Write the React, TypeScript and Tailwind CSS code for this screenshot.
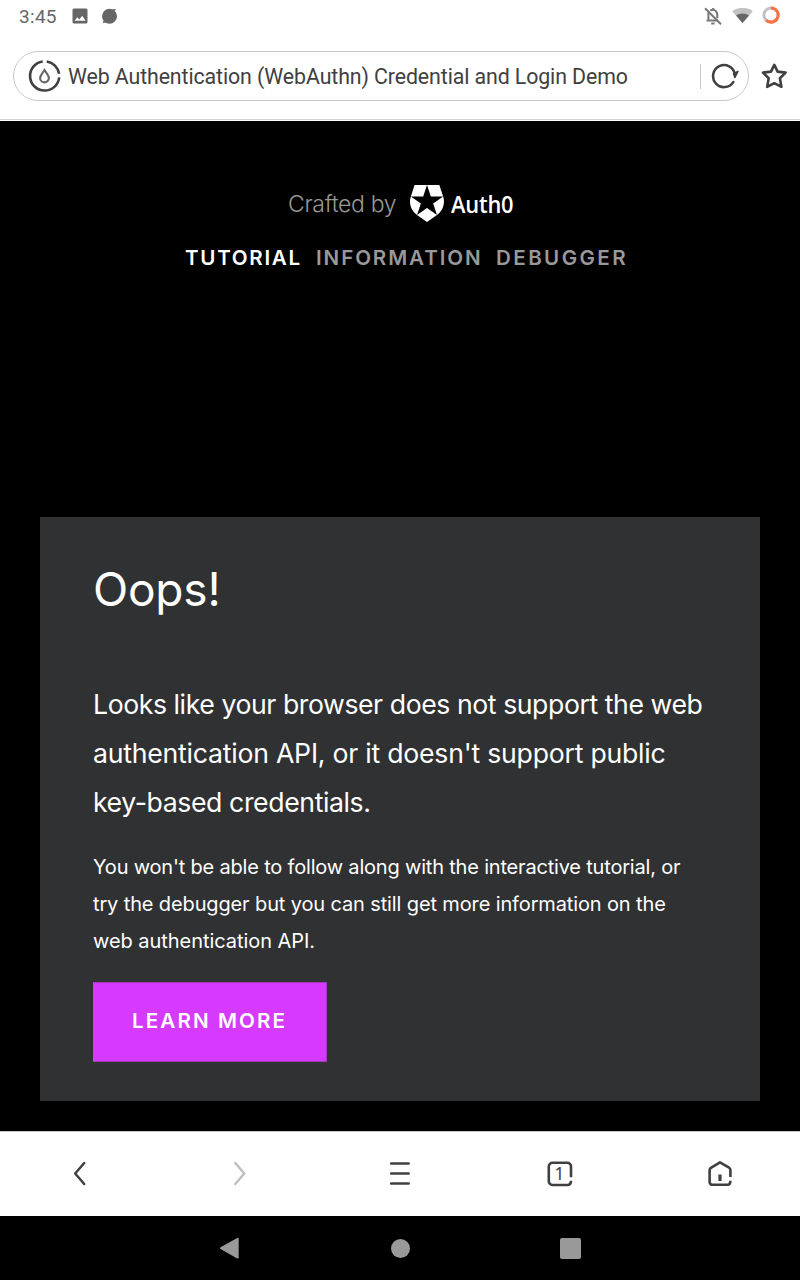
import React from "react";

const ink = "#404042";

function StatusBar() {
  return (
    <div className="flex h-8 items-center pl-[19px] pr-5">
      <span className="w-[53px] whitespace-nowrap pt-px font-['Roboto',sans-serif] text-[19px] leading-8 tracking-[0.3px] text-[#666]">3:45</span>
      <svg className="h-4 w-4" viewBox="0 0 16 16">
        <rect x=".5" y=".5" width="15" height="15" rx="1.6" fill="#666" />
        <path d="M2.6 12.7 5.3 9.2l2 2.3 2.9-3.8 3.4 5z" fill="#fff" />
      </svg>
      <svg className="ml-[13px] h-4 w-[17px]" viewBox="0 0 17 16">
        <circle cx="8.5" cy="8.2" r="7.5" fill="#666" />
        <path d="M11 1.2 14.8.9 14 3M2 12.5 2.2 15.3 5 14.6" fill="#666" />
      </svg>
      <svg className="ml-auto h-[18px] w-[18px]" viewBox="0 0 18 18" fill="none" stroke="#777" strokeWidth="2">
        <path d="M1 1.2 17 17.2" />
        <path d="M4.4 5.2V13M2.6 13.6h11.2M6.3 3.6C8 2.5 10.3 2.8 11.8 4.1c1.1 1 1.5 2.2 1.5 3.7v3.4" />
        <path d="M9.2 1v2M7.2 16.4h3.4" />
      </svg>
      <svg className="ml-[10px] h-4 w-[21px]" viewBox="0 0 21 16">
        <path d="M.2 3.2C6-1.3 15-1.3 20.8 3.2L10.5 15z" fill="#c1c1c1" />
        <path d="M4 7.6C8 4.7 13 4.7 17 7.6L10.5 15z" fill="#666" />
      </svg>
      <svg className="-mt-[2px] ml-[9px] h-[18px] w-[18px]" viewBox="0 0 18 18" fill="none" strokeWidth="3">
        <circle cx="9" cy="9" r="7.1" stroke="#c1c1c1" />
        <path d="M9 1.9a7.1 7.1 0 1 1-4.8 12.3" stroke="#ff7043" />
      </svg>
    </div>
  );
}

function AddressBar() {
  return (
    <div className="flex h-[88px] items-center pl-[13px]">
      <div className="flex h-[50px] w-[736px] items-center rounded-full border border-[#c8c8c8] pl-[14px]">
        <svg className="h-[34px] w-[34px] shrink-0" viewBox="0 0 34 34" fill="none" stroke={ink} strokeWidth="2.6">
          <path d="M14.7 2.5A14.6 14.6 0 1 0 31.2 18.4M18.7 2.5A14.6 14.6 0 0 1 31.1 14.8" />
          <path d="M16.5 11c-2.3 3.6-4.4 5.4-4.4 8a4.4 4.4 0 0 0 8.8 0c0-2.6-2.1-4.4-4.4-8z" stroke="#666" strokeWidth="2.1" />
        </svg>
        <span className="ml-[6px] whitespace-nowrap pt-[2px] font-['Roboto',sans-serif] text-[21.33px] tracking-[-0.1px] text-[#404042]">
          Web Authentication (WebAuthn) Credential and Login Demo
        </span>
        <span className="ml-auto h-[25px] w-px bg-[#c8c8c8]" />
        <svg className="ml-[10px] mr-[9px] h-7 w-7 shrink-0" viewBox="0 0 28 28" fill="none" stroke={ink} strokeWidth="2.5">
          <path d="M22.3 20.1A11 11 0 1 1 23.9 12.3" strokeLinecap="round" />
          <path d="M22.6 11.8 23.9 15.4l3-6z" fill={ink} strokeWidth="1.6" strokeLinejoin="round" />
        </svg>
      </div>
      <svg className="ml-3 h-7 w-7" viewBox="0 0 28 28" fill="none" stroke={ink} strokeWidth="2.6" strokeLinejoin="round">
        <path d="M13.3 2.8 16.6 9.6 24.6 10.6 18.9 16.2 20.4 24.8 13.3 21.2 6.2 24.8 7.7 16.2 2 10.6 10 9.6z" />
      </svg>
    </div>
  );
}

function Content() {
  return (
    <main className="h-[1010px] bg-black px-10 pt-[60px] font-['Inter',sans-serif] text-white">
      <div className="flex h-11 items-center pl-[248px]">
        <span className="w-[122px] whitespace-nowrap pt-[2px] text-[23px] font-light tracking-[-0.33px] text-[#999]">Crafted by</span>
        <svg className="h-[37px] w-[34px]" viewBox="1.5 0 21 24" preserveAspectRatio="none" fill="#fff">
          <path d="M21.98 7.448L19.62 0H4.347L2.02 7.448c-1.352 4.312.03 9.206 3.815 12.015L12.007 24l6.157-4.552c3.755-2.81 5.182-7.688 3.815-12.015l-6.16 4.58 2.343 7.45-6.157-4.597-6.158 4.58 2.358-7.433-6.188-4.55 7.63-.045L12.008 0l2.356 7.404 7.615.044z" />
        </svg>
        <span className="ml-[7px] origin-left scale-x-[0.91] whitespace-nowrap pt-px font-['Open_Sans',sans-serif] text-[24px] font-semibold tracking-[-0.2px]">Auth0</span>
      </div>
      <nav className="mt-[15px] flex h-9 items-center gap-[15px] whitespace-nowrap pl-[145px] text-[20.6px] font-semibold text-[#999]">
        <a className="w-[116px] tracking-[1.7px] text-white">TUTORIAL</a>
        <a className="w-[165px] tracking-[1.9px]">INFORMATION</a>
        <a className="tracking-[2.4px]">DEBUGGER</a>
      </nav>
      <section className="mt-[241px] h-[584px] bg-[#303133] pl-[53px] pt-[41px]">
        <h1 className="h-[60px] text-[46px] leading-[63px] tracking-[-0.2px]">Oops!</h1>
        <div className="mt-[62px] whitespace-nowrap text-[26.67px] leading-[49px]">
          <p className="tracking-[-0.44px]">Looks like your browser does not support the web</p>
          <p className="tracking-[-0.24px]">authentication API, or it doesn't support public</p>
          <p className="tracking-[-0.41px]">key-based credentials.</p>
        </div>
        <div className="mt-[22px] whitespace-nowrap text-[20px] leading-[37px]">
          <p className="tracking-[-0.19px]">You won't be able to follow along with the interactive tutorial, or</p>
          <p className="tracking-[-0.13px]">try the debugger but you can still get more information on the</p>
          <p className="tracking-[-0.05px]">web authentication API.</p>
        </div>
        <button className="mt-[22px] block h-[80px] w-[234px] border border-[#a338bd] border-l-[#d63aff] bg-[#d63aff] pb-[2px] pl-[38px] text-left text-[20.6px] font-semibold tracking-[2.1px]">
          LEARN MORE
        </button>
      </section>
    </main>
  );
}

function Toolbar() {
  const icon = "h-8 w-8";
  return (
    <div className="grid h-[85px] grid-cols-5 place-items-center border-t border-[#c8c8c8] bg-white">
      <svg className={icon} viewBox="0 0 32 32" fill="none" stroke={ink} strokeWidth="2.5" strokeLinecap="round" strokeLinejoin="round">
        <path d="M20.2 5 11.2 15.5 20.2 26" />
      </svg>
      <svg className={icon} viewBox="0 0 32 32" fill="none" stroke="#bfbfbf" strokeWidth="2.5" strokeLinecap="round" strokeLinejoin="round">
        <path d="M11.3 5 20.3 15.5 11.3 26" />
      </svg>
      <svg className={icon} viewBox="0 0 32 32" fill="none" stroke={ink} strokeWidth="2.7" strokeLinecap="round">
        <path d="M7.2 5.5h17.4M7.2 15.5h17.4M7.2 25.5h17.4" />
      </svg>
      <div className="relative h-8 w-8">
        <svg className={icon} viewBox="0 0 32 32" fill="none" stroke={ink} strokeWidth="2.6">
          <path d="M27 19.3V8.5A3.7 3.7 0 0 0 23.3 4.8H8.5A3.7 3.7 0 0 0 4.8 8.5v14.8A3.7 3.7 0 0 0 8.5 27h14.8c2.2 0 3.7-1.5 3.7-4.2" />
        </svg>
        <span className="absolute inset-x-0 top-0 pr-px text-center font-['Noto_Sans',sans-serif] text-[18px] leading-[31px] text-[#404042]">1</span>
      </div>
      <svg className={icon} viewBox="0 0 32 32" fill="none" stroke={ink} strokeWidth="2.6" strokeLinejoin="round">
        <path d="M26.4 19V12.2a3 3 0 0 0-1.3-2.5L16 4.3 6.9 9.9a3 3 0 0 0-1.3 2.5v11.6A2.8 2.8 0 0 0 8.4 26.8h15.2c1.8 0 2.8-1 2.8-4" />
        <path d="M16 16.5V23" strokeWidth="3.2" />
      </svg>
    </div>
  );
}

function SystemNav() {
  return (
    <div className="flex h-16 items-center bg-black pl-[219px]">
      <svg className="h-6 w-5" viewBox="0 0 20 24" fill="#999" stroke="#999" strokeLinejoin="round" strokeWidth="2">
        <path d="M18.7 2.8v18.8L2 12.2z" />
      </svg>
      <span className="ml-[152px] h-[19px] w-[19px] rounded-full bg-[#999]" />
      <span className="ml-[150px] h-[21px] w-[21px] rounded-[2px] bg-[#999]" />
    </div>
  );
}

export default function App() {
  return (
    <div className="flex h-[1280px] w-[800px] flex-col overflow-hidden bg-white">
      <StatusBar />
      <div className="h-[89px]">
        <div className="h-[88px] border-b border-[#d0d0d0]">
          <AddressBar />
        </div>
      </div>
      <Content />
      <Toolbar />
      <SystemNav />
    </div>
  );
}
